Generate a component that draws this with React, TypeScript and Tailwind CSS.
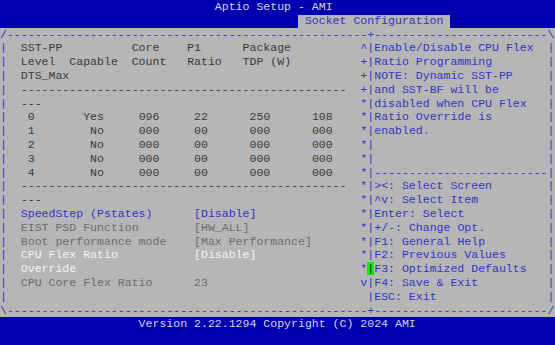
import React from "react";

// 80x25 text-mode grid: 555 / 80 = 6.9375px per cell, 345 / 25 = 13.8px per row
type Seg = { col: number; text: string; cls?: string };

const BLUE = "text-[#3434c4]";
const DARK = "text-[#3a3a3a]";
const GREY = "text-[#6c6c6c]";
const WHITE = "text-[#f4f4f4]";
const TITLE = "text-[#d4d4dc]";

const Line: React.FC<{ segs: Seg[]; bg?: string }> = ({ segs, bg = "bg-[#b6b6b6]" }) => {
  const out: React.ReactNode[] = [];
  let pos = 0;
  segs.forEach((s, i) => {
    if (s.col > pos) out.push(<span key={`p${i}`}>{" ".repeat(s.col - pos)}</span>);
    out.push(
      <span key={i} className={s.cls}>
        {s.text}
      </span>
    );
    pos = s.col + s.text.length;
  });
  if (pos < 80) out.push(<span key="end">{" ".repeat(80 - pos)}</span>);
  return <div className={`h-[13.8px] leading-[13.8px] whitespace-pre ${bg}`}>{out}</div>;
};

// left panel row with border, scroll marker and help text
const row = (left: Seg[], marker: string, help: string, helpCls = BLUE, cursor = false): Seg[] => [
  { col: 0, text: "|", cls: BLUE },
  ...left,
  { col: 52, text: marker, cls: BLUE },
  ...(cursor
    ? [{ col: 53, text: "|", cls: "text-[#1a1a1a] bg-[#00ee00]" }]
    : [{ col: 53, text: "|", cls: BLUE }]),
  ...(help ? [{ col: 54, text: help, cls: helpCls }] : []),
  { col: 79, text: "|", cls: BLUE },
];

const d = (col: number, text: string, cls = DARK): Seg => ({ col, text, cls });

const tableRow = (lvl: string, cap: string, count: string, ratio: string, tdp: string, dts: string): Seg[] => [
  d(4, lvl),
  d(cap === "Yes" ? 12 : 13, cap),
  d(20, count),
  d(28, ratio),
  d(36, tdp),
  d(45, dts),
];

export default function App() {
  const dashes47 = "-".repeat(47);
  const rows: Seg[][] = [
    row([d(3, "SST-PP"), d(19, "Core"), d(27, "P1"), d(35, "Package")], "^", "Enable/Disable CPU Flex"),
    row([d(3, "Level"), d(10, "Capable"), d(19, "Count"), d(27, "Ratio"), d(35, "TDP (W)")], "+", "Ratio Programming"),
    row([d(3, "DTS_Max")], "+", "NOTE: Dynamic SST-PP"),
    row([d(3, dashes47)], "+", "and SST-BF will be"),
    row([d(3, "---")], "*", "disabled when CPU Flex"),
    row(tableRow("0", "Yes", "096", "22", "250", "108"), "*", "Ratio Override is"),
    row(tableRow("1", "No", "000", "00", "000", "000"), "*", "enabled."),
    row(tableRow("2", "No", "000", "00", "000", "000"), "*", ""),
    row(tableRow("3", "No", "000", "00", "000", "000"), "*", ""),
    row(tableRow("4", "No", "000", "00", "000", "000"), "*", "-".repeat(25)),
    row([d(3, dashes47)], "*", "><: Select Screen"),
    row([d(3, "---")], "*", "^v: Select Item"),
    row([d(3, "SpeedStep (Pstates)", BLUE), d(28, "[Disable]", BLUE)], "*", "Enter: Select"),
    row([d(3, "EIST PSD Function", GREY), d(28, "[HW_ALL]", GREY)], "*", "+/-: Change Opt."),
    row([d(3, "Boot performance mode", GREY), d(28, "[Max Performance]", GREY)], "*", "F1: General Help"),
    row([d(3, "CPU Flex Ratio", WHITE), d(28, "[Disable]", WHITE)], "*", "F2: Previous Values"),
    row([d(3, "Override", WHITE)], "*", "F3: Optimized Defaults", BLUE, true),
    row([d(3, "CPU Core Flex Ratio", GREY), d(28, "23", GREY)], "v", "F4: Save & Exit"),
    row([], " ", "ESC: Exit"),
  ];

  return (
    <div className="w-[555px] h-[345px] overflow-hidden bg-[#0000b0] text-[11.5625px] font-['Liberation_Mono','Courier_New',monospace] flex flex-col">
      <Line bg="bg-[#0000b0]" segs={[{ col: 31, text: "Aptio Setup - AMI", cls: TITLE }]} />
      <div className="h-[13.8px] flex items-end whitespace-pre bg-[#0000b0]">
        <span>{" ".repeat(43)}</span>
        <span className="h-[12.6px] leading-[12.6px] bg-[#b6b6b6] text-[#3434c4]"> Socket Configuration </span>
      </div>
      <Line segs={[{ col: 0, text: "/" + "-".repeat(52) + "+" + "-".repeat(25) + "\\", cls: BLUE }]} />
      {rows.map((segs, i) => (
        <Line key={i} segs={segs} />
      ))}
      <Line segs={[{ col: 0, text: "\\" + "-".repeat(52) + "+" + "-".repeat(25) + "/", cls: BLUE }]} />
      <Line bg="bg-[#0000b0]" segs={[{ col: 20, text: "Version 2.22.1294 Copyright (C) 2024 AMI", cls: TITLE }]} />
      <Line bg="bg-[#0000b0]" segs={[]} />
    </div>
  );
}
